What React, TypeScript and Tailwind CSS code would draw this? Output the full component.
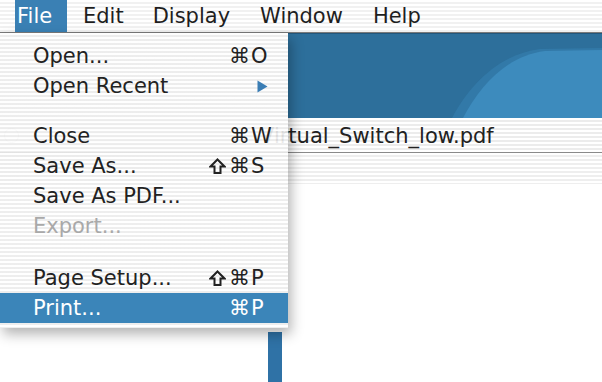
import React from "react";

type Item =
  | { kind: "sep"; h: string }
  | { kind: "item"; label: string; shift?: boolean; key?: string; sub?: boolean; disabled?: boolean; active?: boolean };

const fileMenu: Item[] = [
  { kind: "item", label: "Open...", key: "O" },
  { kind: "item", label: "Open Recent", sub: true },
  { kind: "sep", h: "h-[20px]" },
  { kind: "item", label: "Close", key: "W" },
  { kind: "item", label: "Save As...", key: "S", shift: true },
  { kind: "item", label: "Save As PDF..." },
  { kind: "item", label: "Export...", disabled: true },
  { kind: "sep", h: "h-[22px]" },
  { kind: "item", label: "Page Setup...", key: "P", shift: true },
  { kind: "item", label: "Print...", key: "P", active: true },
];

// outlined shift arrow, the way Aqua menus draw it
const ShiftGlyph = ({ color }: { color: string }) => (
  <svg width="17" height="17" viewBox="0 0 17 17" className="mr-[3px]">
    <path d="M8.5 1.5 L15.5 8.5 H11.5 V15 H5.5 V8.5 H1.5 Z" fill="none" stroke={color} strokeWidth="2" strokeLinejoin="miter" />
  </svg>
);

const MenuRow = ({ item }: { item: Item }) => {
  if (item.kind === "sep") return <div className={item.h} />;
  const tone = item.active
    ? "bg-[#3b85b9] text-white"
    : item.disabled
      ? "text-[#a9a9a9]"
      : "text-[#222]";
  return (
    <div className={`flex h-[30px] items-center pl-[33px] pr-[18px] ${tone}`}>
      <span className="flex-1">{item.label}</span>
      {item.sub ? (
        <svg width="11" height="13" viewBox="0 0 11 13" className="mr-[2px]">
          <path d="M0.5 0.5 L10.5 6.5 L0.5 12.5 Z" fill="#3a7db4" />
        </svg>
      ) : item.key ? (
        <span className="flex items-center">
          {item.shift && <ShiftGlyph color={item.active ? "#fff" : "#222"} />}
          <span>⌘</span>
          <span className="w-[20px] pl-[1px]">{item.key}</span>
        </span>
      ) : null}
    </div>
  );
};

export default function App() {
  return (
    <div className="relative h-[382px] w-[602px] overflow-hidden bg-white font-['DejaVu_Sans',sans-serif] text-[21px] leading-none">
      {/* menu bar */}
      <div className="flex h-[33px] items-stretch border-b border-[#7a7a7a] bg-[image:repeating-linear-gradient(to_bottom,#ffffff_0px,#ffffff_2px,#f1f1f1_2px,#f1f1f1_4px)] text-[#1e1e1e]">
        <div className="ml-[15px] flex w-[52px] items-center bg-[#3a80b4] pl-[2px] text-white">File</div>
        <div className="ml-[16px] flex items-center">Edit</div>
        <div className="ml-[29px] flex items-center">Display</div>
        <div className="ml-[30px] flex items-center">Window</div>
        <div className="ml-[30px] flex items-center">Help</div>
      </div>

      {/* document window behind the menu */}
      <div className="flex flex-col">
        <div className="flex h-[85px]">
          <div className="w-[288px] bg-[#f4f4f4]" />
          <div className="relative flex-1 border-t border-[#23577c] bg-[#2d6f9b]">
            <svg className="absolute inset-0" width="314" height="84" viewBox="288 0 314 84">
              <path d="M452 84 C 470 50, 500 20, 540 15 L602 14 L602 84 Z" fill="#3580b1" opacity="0.6" />
              <path d="M463 84 C 480 52, 506 22, 545 17 L602 16 L602 84 Z" fill="#3d8bbd" />
            </svg>
          </div>
        </div>
        <div className="flex h-[35px] items-center border-b border-[#8a8a8a] bg-[image:repeating-linear-gradient(to_bottom,#ffffff_0px,#ffffff_2px,#ececec_2px,#ececec_4px)] pl-[260px] text-[#222]">
          <div className="absolute left-[4px] top-[128px] h-[15px] w-[15px] rounded-full border border-[#c9c9c9]" />
          <span className="pt-[2px]">Virtual_Switch_low.pdf</span>
        </div>
        <div className="h-[31px] bg-[image:repeating-linear-gradient(to_bottom,#ffffff_0px,#ffffff_2px,#eeeeee_2px,#eeeeee_4px)]" />
        <div className="flex h-[198px]">
          <div className="ml-[268px] mt-[148px] w-[14px] bg-[#2f72a6]" />
        </div>
      </div>

      {/* File menu */}
      <div className="absolute left-0 top-[33px] w-[288px] bg-[image:repeating-linear-gradient(to_bottom,rgba(255,255,255,0.9)_0px,rgba(255,255,255,0.9)_2px,rgba(236,236,236,0.9)_2px,rgba(236,236,236,0.9)_4px)] pb-[5px] pt-[8px] shadow-[3px_6px_12px_rgba(0,0,0,0.3)]">
        {fileMenu.map((item, i) => (
          <MenuRow key={i} item={item} />
        ))}
      </div>
    </div>
  );
}
